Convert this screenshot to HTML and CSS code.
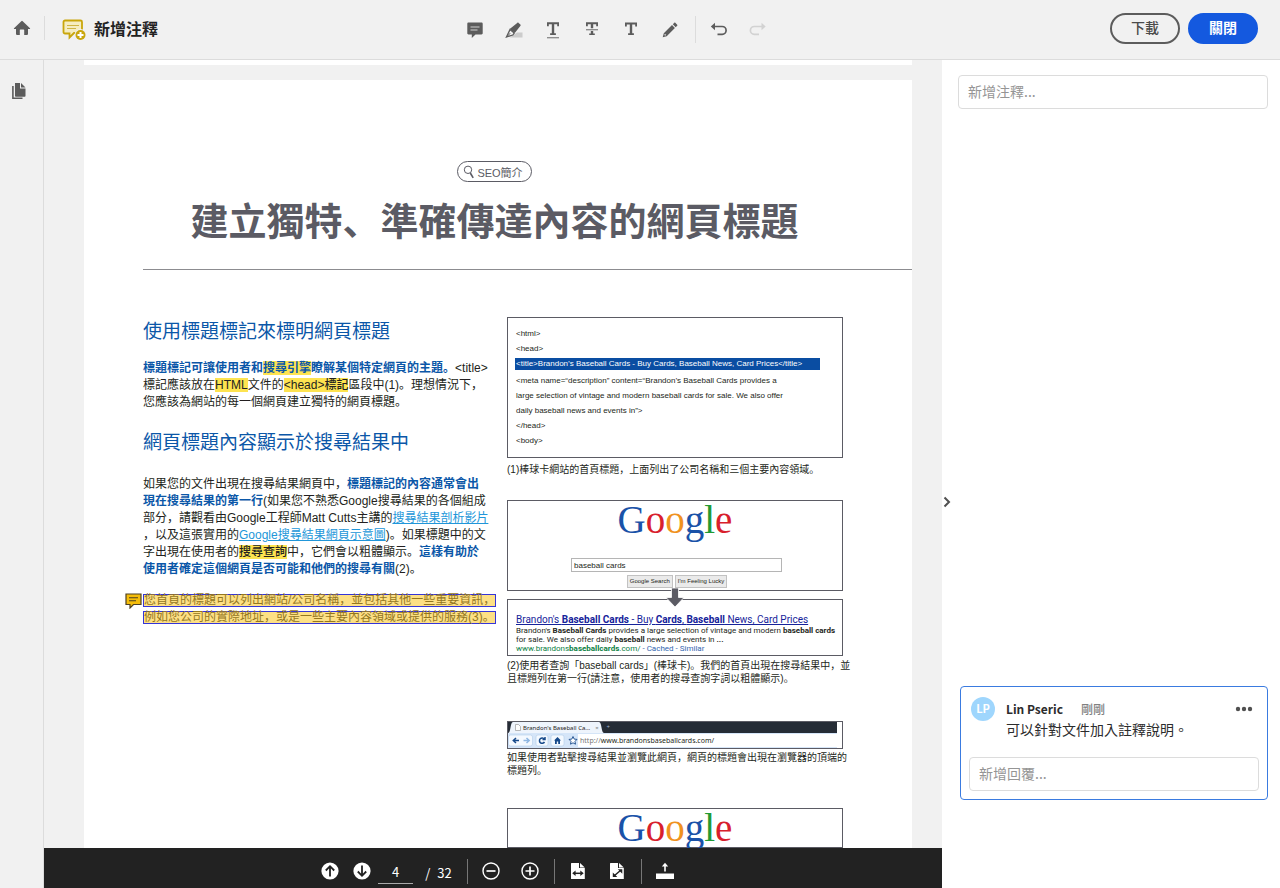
FILE: index.html
```html
<!DOCTYPE html>
<html lang="zh-Hant">
<head>
<meta charset="utf-8">
<meta name="viewport" content="width=device-width, initial-scale=1">
<title>新增注釋</title>
<link rel="stylesheet" href="styles.css">
</head>
<body>
<header class="topbar">
  <div class="brand">
    <button class="icon-btn home" aria-label="首頁"><svg width="18" height="16" viewBox="0 0 18 16"><path fill="#5c5c5c" d="M8.3 1.2 1 8.2c-.3.4-.1.9.4.9H3v5c0 .5.3.8.8.8h3V10c0-.4.2-.6.6-.6h3.2c.4 0 .6.2.6.6v4.9h3c.5 0 .8-.3.8-.8v-5h1.6c.5 0 .7-.5.4-.9L9.700 1.200a1 1 0 0 0-1.400 0z"/></svg></button>
    <span class="divider"></span>
    <svg class="brand-icon" width="24" height="22" viewBox="0 0 24 22"><path d="M3 1.500h15.500a1.500 1.500 0 0 1 1.500 1.500v11H12L7.500 18.500V14.500H3A1.500 1.500 0 0 1 1.500 13V3A1.500 1.500 0 0 1 3 1.500z" fill="#f5edc2" stroke="#c9a60c" stroke-width="1.800"/><path d="M5 6.500h12M5 9.500h9" stroke="#cfb545" stroke-width="1.200"/><circle cx="18.500" cy="16" r="6" fill="#f1f1f1"/><circle cx="18.500" cy="16" r="5" fill="#c9a60c"/><path d="M18.500 13v6M15.500 16h6" stroke="#fff" stroke-width="2"/></svg>
    <h1 class="app-title">新增注釋</h1>
  </div>
  <nav class="tools" aria-label="注釋工具">
    <button class="icon-btn" aria-label="新增注釋"><svg width="18" height="18" viewBox="0 0 18 18"><path fill="#5c5c5c" d="M2.500 1.500h13c.7 0 1.200.5 1.200 1.200v9.600c0 .7-.5 1.200-1.200 1.200H9.500L5.800 17v-3.500H2.500c-.7 0-1.200-.5-1.200-1.200V2.700c0-.7.500-1.200 1.200-1.200z"/><path d="M4.500 6h9M4.500 9h7" stroke="#d0d0d0" stroke-width="1.200"/></svg></button>
    <button class="icon-btn" aria-label="螢光標示"><svg width="18" height="18" viewBox="0 0 18 18"><path fill="#ccc" d="M5 16.500 12 11.500h5.500v5z"/><path fill="#5c5c5c" d="M12.200 1.900c.5-.4 1-.4 1.400 0l1.800 1.500c.4.4.4.9.1 1.400L9.800 12 4.700 8z"/><path d="M5 8.600 9.200 12 7.800 14 1.500 16z" fill="#f1f1f1" stroke="#5c5c5c" stroke-width="1.300"/><path d="m1.500 16.200 3.700-4" stroke="#5c5c5c"/></svg></button>
    <button class="icon-btn" aria-label="底線"><svg width="18" height="18" viewBox="0 0 18 18"><path fill="#5c5c5c" d="M3 1.300h12v4h-1.800v-2H10.200v8.900h1.700V14H6.100v-1.800h1.700V3.300H4.800v2H3z"/><path d="M3 16.700h12" stroke="#888" stroke-width="1.300"/></svg></button>
    <button class="icon-btn" aria-label="刪除線"><svg width="18" height="18" viewBox="0 0 18 18"><path fill="#5c5c5c" d="M3 1.300h12v4h-1.800v-2H10.200v4H7.800v-4H4.800v2H3zM7.800 10h2.400v2.400h1.600V14H6.200v-1.600h1.600z"/><path d="M3 8.700h12" stroke="#888" stroke-width="1.300"/></svg></button>
    <button class="icon-btn" aria-label="文字"><svg width="18" height="18" viewBox="0 0 18 18"><path fill="#5c5c5c" d="M3 1.500h12v4h-1.800v-2H10.200v8.700h1.700V14H6.100v-1.800h1.700V3.500H4.800v2H3z"/></svg></button>
    <button class="icon-btn" aria-label="鉛筆"><svg width="18" height="18" viewBox="0 0 18 18"><path fill="#5c5c5c" d="M13.300 1.800c.3-.3.700-.3 1 0l1.900 1.900c.3.300.3.700 0 1L14.700 6.200 11.800 3.300zM11 4.100 13.900 7 5.700 15.200 1.700 16.300 2.800 12.300z"/><path d="m3.600 13.300 1.100 1.100" stroke="#ccc" stroke-width="1.500"/></svg></button>
    <span class="divider tall"></span>
    <button class="icon-btn" aria-label="復原"><svg width="18" height="18" viewBox="0 0 18 18"><path d="M3 5.500h9.200a3.900 3.900 0 0 1 0 7.800H7.500" fill="none" stroke="#5c5c5c" stroke-width="1.700"/><path fill="#5c5c5c" d="M.8 5.500 5 1.800v7.400z"/></svg></button>
    <button class="icon-btn" aria-label="重做" disabled><svg width="18" height="18" viewBox="0 0 18 18"><path d="M14.500 5.500H5.300a3.900 3.900 0 0 0 0 7.800h4.700" fill="none" stroke="#d2d2d2" stroke-width="1.700"/><path fill="#d2d2d2" d="M16.700 5.500 12.500 1.800v7.400z"/></svg></button>
  </nav>
  <div class="actions">
    <button class="pill-btn">下載</button>
    <button class="pill-btn primary">關閉</button>
  </div>
</header>

<main class="workspace">
  <aside class="rail">
    <button class="icon-btn rail-btn" aria-label="頁面縮圖"><svg width="16" height="18" viewBox="0 0 16 18"><path fill="#5c5c5c" d="M4 1h5v5.500h5.500V14a.8.8 0 0 1-.8.800H4.800A.8.800 0 0 1 4 14z"/><path fill="#5c5c5c" d="M10 1l4.500 4.500H10z"/><path d="M1.900 4v12.200h9.600" fill="none" stroke="#5c5c5c" stroke-width="1.600"/></svg></button>
  </aside>

  <section class="center">
    <div class="viewer">
      <div class="sheet sheet-prev"></div>
      <article class="sheet page" lang="zh-Hans">
        <div class="hero">
          <span class="tag"><svg width="12" height="14" viewBox="0 0 12 14"><circle cx="5" cy="4.800" r="3.700" fill="none" stroke="#5b5b64"/><path d="m7.300 8 2.900 4.800" stroke="#5b5b64" stroke-width="1.600"/></svg>SEO簡介</span>
          <h2 class="doc-title">建立獨特、準確傳達內容的網頁標題</h2>
        </div>
        <hr class="rule">
        <div class="columns">
          <div class="col left">
            <h3 class="sub first">使用標題標記來標明網頁標題</h3>
            <p class="text"><b>標題標記可讓使用者和<mark>搜尋引擎</mark>瞭解某個特定網頁的主題。</b>&lt;title&gt;<br>標記應該放在<mark>HTML</mark>文件的<mark>&lt;head&gt;標記</mark>區段中(1)。理想情況下，<br>您應該為網站的每一個網頁建立獨特的網頁標題。</p>
            <h3 class="sub second">網頁標題內容顯示於搜尋結果中</h3>
            <p class="text">如果您的文件出現在搜尋結果網頁中，<b>標題標記的內容通常會出</b><br><b>現在搜尋結果的第一行</b>(如果您不熟悉Google搜尋結果的各個組成<br>部分，請觀看由Google工程師Matt Cutts主講的<a href="#">搜尋結果剖析影片</a><br>，以及這張實用的<a href="#">Google搜尋結果網頁示意圖</a>)。如果標題中的文<br>字出現在使用者的<mark>搜尋查詢</mark>中，它們會以粗體顯示。<b>這樣有助於</b><br><b>使用者確定這個網頁是否可能和他們的搜尋有關</b>(2)。</p>
            <div class="annotated">
              <svg class="note-pin" width="17" height="16" viewBox="0 0 17 16"><path d="M1 1h15v10.500H8.500L5 15v-3.500H1z" fill="#f5bd0a" stroke="#4d4023" stroke-width="1.200"/><path d="M4 4.800h9M4 7.800h7" stroke="#4d4023" stroke-width="1.100"/></svg>
              <p class="note-line"><span>您首頁的標題可以列出網站/公司名稱，並包括其他一些重要資訊，</span></p>
              <p class="note-line"><span>例如您公司的實際地址，或是一些主要內容領域或提供的服務(3)。</span></p>
            </div>
          </div>

          <div class="col">
            <div class="frame code">
              <div>&lt;html&gt;</div>
              <div>&lt;head&gt;</div>
              <div class="hit">&lt;title&gt;Brandon’s Baseball Cards - Buy Cards, Baseball News, Card Prices&lt;/title&gt;</div>
              <div>&lt;meta name=“description” content=“Brandon’s Baseball Cards provides a</div>
              <div>large selection of vintage and modern baseball cards for sale. We also offer</div>
              <div>daily baseball news and events in”&gt;</div>
              <div>&lt;/head&gt;</div>
              <div>&lt;body&gt;</div>
            </div>
            <p class="caption cap-one">(1)棒球卡網站的首頁標題，上面列出了公司名稱和三個主要內容領域。</p>
            <div class="frame search">
              <div class="logo"><span class="b">G</span><span class="r">o</span><span class="o">o</span><span class="b">g</span><span class="g">l</span><span class="r">e</span></div>
              <input class="query" type="text" value="baseball cards" aria-label="搜尋">
              <div class="query-btns"><button>Google Search</button><button>I'm Feeling Lucky</button></div>
              <svg class="arrow" width="18" height="19" viewBox="0 0 18 19"><path d="M5.500 0h7v9.500H18L9 19 0 9.500h5.500z" fill="#5b5b64" stroke="#fff" stroke-width=".8"/></svg>
            </div>
            <div class="frame result">
              <a class="result-title" href="#">Brandon's <b>Baseball Cards</b> - Buy <b>Cards</b>, <b>Baseball</b> News, Card Prices</a>
              <p>Brandon's <b>Baseball Cards</b> provides a large selection of vintage and modern <b>baseball cards</b><br>for sale. We also offer daily <b>baseball</b> news and events in <b>...</b></p>
              <p class="result-url"><span>www.brandons<b>baseballcards</b>.com/</span> - Cached - Similar</p>
            </div>
            <p class="caption cap-two">(2)使用者查詢「baseball cards」(棒球卡)。我們的首頁出現在搜尋結果中，並<br>且標題列在第一行(請注意，使用者的搜尋查詢字詞以粗體顯示)。</p>
            <div class="frame browser">
              <div class="tabs">
                <svg width="5" height="11" viewBox="0 0 5 11" preserveAspectRatio="none"><path d="M0 11C3 11 2 0 5 0v11z" fill="#eef4fc"/></svg>
                <span class="tab"><svg width="6" height="7" viewBox="0 0 6 7"><path d="M.5.5h3l2 2v4h-5z" fill="#fff" stroke="#999" stroke-width=".7"/></svg>Brandon's Baseball Ca...<i>×</i></span>
                <svg width="5" height="11" viewBox="0 0 5 11" preserveAspectRatio="none"><path d="M5 11C2 11 3 0 0 0v11z" fill="#eef4fc"/></svg>
                <span class="plus">+</span>
              </div>
              <div class="address">
                <svg width="60" height="13" viewBox="0 0 60 13"><g fill="#f4f9ff" stroke="#b4cdea" stroke-width=".6"><rect x=".5" y="1" width="24" height="11" rx="2"/><rect x="28" y="1" width="12" height="11" rx="2"/><rect x="43" y="1" width="13" height="11" rx="2"/></g><g fill="none" stroke="#174a8b" stroke-width="1.500"><path d="M11 6.500H5.500M8 4 5.300 6.500 8 9"/><path d="M15.500 6.500H21M18.500 4l2.700 2.500L18.500 9" stroke="#8fb7e2"/><path d="M36.300 5A2.700 2.700 0 1 0 36.500 8M37 3v2.500h-2.500"/></g><path d="m46 6.500 3.500-3.500L53 6.500h-1V10h-1.800V7.500h-1.400V10H47V6.500z" fill="#174a8b"/></svg>
                <svg width="10" height="13" viewBox="0 0 10 13"><path d="m5 2.500 1.200 2.600 2.800.3-2 2 .5 2.800L5 8.800l-2.500 1.400.5-2.800-2-2 2.800-.3z" fill="#fff" stroke="#174a8b" stroke-width=".9"/></svg>
                <span class="url"><i>http://</i>www.brandonsbaseballcards.com/</span>
              </div>
            </div>
            <p class="caption cap-three">如果使用者點擊搜尋結果並瀏覽此網頁，網頁的標題會出現在瀏覽器的頂端的<br>標題列。</p>
            <div class="frame search">
              <div class="logo"><span class="b">G</span><span class="r">o</span><span class="o">o</span><span class="b">g</span><span class="g">l</span><span class="r">e</span></div>
            </div>
          </div>
        </div>
      </article>
    </div>

    <footer class="pager">
      <button class="icon-btn p-round" aria-label="上一頁"><svg width="18" height="18" viewBox="0 0 18 18"><circle cx="9" cy="9" r="8.600" fill="#fff"/><path d="M9 14.500V4.500M4.800 8.500 9 4.200l4.200 4.300" fill="none" stroke="#222" stroke-width="1.800"/></svg></button>
      <button class="icon-btn p-round" aria-label="下一頁"><svg width="18" height="18" viewBox="0 0 18 18"><circle cx="9" cy="9" r="8.600" fill="#fff"/><path d="M9 3.500v10M4.800 9.500 9 13.800l4.200-4.300" fill="none" stroke="#222" stroke-width="1.800"/></svg></button>
      <input class="page-no" type="text" value="4" aria-label="頁碼">
      <span class="page-total"><span>/</span><span>32</span></span>
      <span class="p-divider"></span>
      <button class="icon-btn" aria-label="縮小"><svg width="18" height="18" viewBox="0 0 18 18"><circle cx="9" cy="9" r="8" fill="none" stroke="#fff" stroke-width="1.400"/><path d="M4.500 9h9" stroke="#fff" stroke-width="1.700"/></svg></button>
      <button class="icon-btn" aria-label="放大"><svg width="18" height="18" viewBox="0 0 18 18"><circle cx="9" cy="9" r="8" fill="none" stroke="#fff" stroke-width="1.400"/><path d="M4.500 9h9M9 4.500v9" stroke="#fff" stroke-width="1.700"/></svg></button>
      <span class="p-divider"></span>
      <button class="icon-btn" aria-label="符合寬度"><svg width="18" height="18" viewBox="0 0 18 18"><path fill="#fff" d="M2 1.500A.6.600 0 0 1 2.600.9H10v5.200h5.800V17H2.600a.6.600 0 0 1-.6-.600zM11 .9l4.800 4.500H11z"/><path d="M6 11.300h6" stroke="#222" stroke-width="1.500"/><path fill="#222" d="m3.200 11.300 3.400-2.800v5.600zM14.700 11.300l-3.400-2.800v5.600z"/></svg></button>
      <button class="icon-btn" aria-label="符合頁面"><svg width="18" height="18" viewBox="0 0 18 18"><path fill="#fff" d="M2 1.500A.6.600 0 0 1 2.600.9H10v5.200h5.800V17H2.600a.6.600 0 0 1-.6-.600zM11 .9l4.800 4.500H11z"/><path d="m6.500 13.500 6-5" stroke="#222" stroke-width="1.500"/><path fill="#222" d="M4.800 15v-4.500L9.300 15zM14.300 7.200v4.500L9.800 7.200z"/></svg></button>
      <span class="p-divider"></span>
      <button class="icon-btn" aria-label="浮動工具列"><svg width="18" height="18" viewBox="0 0 18 18"><path fill="#fff" d="M0 11.500h18V17H0z"/><path d="M9 9.500V3" stroke="#fff" stroke-width="1.600"/><path fill="#fff" d="M5.800 4.500 9 .8l3.200 3.700z"/></svg></button>
    </footer>
  </section>

  <aside class="comments">
    <button class="icon-btn collapse" aria-label="收合面板"><svg width="8" height="12" viewBox="0 0 8 12"><path d="m1.500 1.500 4.500 4.500-4.500 4.500" fill="none" stroke="#505050" stroke-width="2"/></svg></button>
    <input class="field" type="text" placeholder="新增注釋..." aria-label="新增注釋">
    <section class="card">
      <div class="card-body">
        <span class="avatar">LP</span>
        <div class="card-main">
          <div class="card-head"><strong>Lin Pseric</strong><time>剛剛</time></div>
          <p class="card-text">可以針對文件加入註釋說明。</p>
        </div>
        <button class="icon-btn more" aria-label="更多選項"><svg width="18" height="6" viewBox="0 0 18 6"><g fill="#505050"><circle cx="3" cy="3" r="2.200"/><circle cx="9" cy="3" r="2.200"/><circle cx="15" cy="3" r="2.200"/></g></svg></button>
      </div>
      <input class="field" type="text" placeholder="新增回覆..." aria-label="新增回覆">
    </section>
  </aside>
</main>
</body>
</html>
```
FILE: styles.css
```css
* { box-sizing: border-box; }
body, h1, h2, h3, p { margin: 0; }
button, input { font: inherit; color: inherit; }
svg { display: block; flex: none; }

body {
  display: flex;
  flex-direction: column;
  height: 100vh;
  overflow: hidden;
  background: #f1f1f1;
  color: #2c2c2c;
  font-family: "Noto Sans CJK TC", "Noto Sans", sans-serif;
  font-size: 14px;
}

.icon-btn {
  display: grid;
  place-items: center;
  width: 39px;
  height: 39px;
  padding: 0;
  border: 0;
  background: none;
}

/* Top bar */
.topbar {
  display: grid;
  grid-template-columns: 1fr auto 1fr;
  align-items: center;
  flex: none;
  height: 60px;
  padding-right: 22px;
  padding-bottom: 3px;
  border-bottom: 1px solid #dcdcdc;
}
.brand { display: flex; align-items: center; }
.home { width: 44px; }
.divider { width: 1px; height: 24px; background: #dcdcdc; }
.tall { height: 27px; margin: 0 4px 0 5px; }
.brand-icon { margin: 4px 8px 0 17px; }
.app-title { font-size: 16px; line-height: 24px; font-weight: 700; color: #222; }
.tools { display: flex; align-items: center; margin-right: 25px; padding-top: 3px; }
.actions { display: flex; justify-content: flex-end; gap: 8px; }
.pill-btn {
  width: 70px;
  height: 31px;
  padding: 0 0 3px;
  border: 2px solid #5c5c5c;
  border-radius: 16px;
  background: none;
  color: #4b4b4b;
  font-weight: 500;
  line-height: 20px;
}
.primary { border-color: #1459df; background: #1459df; color: #fff; font-weight: 700; }

/* Workspace */
.workspace {
  display: grid;
  grid-template-columns: 44px minmax(0, 1fr) 338px;
  flex: 1;
  min-height: 0;
}
.rail { padding-top: 11px; border-right: 1px solid #dcdcdc; }
.rail-btn { width: 38px; }
.center { display: flex; flex-direction: column; min-height: 0; }
.viewer { flex: 1; min-height: 0; overflow: hidden; padding: 0 30px 0 40px; }

/* Document */
.sheet { background: #fff; }
.sheet-prev { height: 5px; margin-bottom: 15px; }
.page {
  padding: 81px 0 60px 59px;
  color: #231f20;
  font-family: "Liberation Sans", "Noto Sans CJK SC", sans-serif;
}
.hero {
  display: flex;
  flex-direction: column;
  align-items: center;
  gap: 15px;
  padding-right: 66px;
  color: #5b5b64;
}
.tag {
  display: flex;
  align-items: center;
  gap: 2px;
  height: 21px;
  padding: 0 8px 0 5px;
  border: 1px solid #5b5b64;
  border-radius: 11px;
  font-size: 11px;
}
.doc-title { font-size: 38px; line-height: 50px; font-weight: 700; white-space: nowrap; }
.rule { height: 1px; margin: 22px 0 47px; border: 0; background: #8c8c90; }
.columns {
  display: grid;
  grid-template-columns: 340fr 336fr;
  gap: 24px;
  padding-right: 69px;
}
.col { min-width: 0; white-space: nowrap; }
.left { padding-top: 2px; }
.sub { color: #0b57a8; font-size: 19px; line-height: 26px; font-weight: 400; }
.first { margin-bottom: 15px; }
.second { margin: 19px 0 20px; }
.text { font-size: 12px; line-height: 17px; }
.text b { color: #0b57a8; }
.text a { color: #2196d9; }
mark { background: #fde350; color: inherit; font-weight: 500; }
b mark { font-weight: 700; }

.annotated { position: relative; margin-top: 14px; }
.note-pin { position: absolute; top: 1px; left: -18px; }
.note-line { display: flex; height: 17px; padding: 2px 0; }
.note-line span {
  border: 1px solid #3535d8;
  background: #fde085;
  color: #94771f;
  font-size: 12px;
  line-height: 11px;
}

.frame { border: 1px solid #5b5b64; }
.code { padding: 8px 22px 9px 7px; font-size: 8px; line-height: 15px; }
.code div { padding-left: 1px; }
.code .hit { margin: 2px 0 3px; background: #0a4da2; color: #fff; line-height: 12px; }
.caption { font-size: 10px; line-height: 13px; }
.cap-one { margin: 5px 0 24px; }
.cap-two { margin: 3px 0 36px; }
.cap-three { margin: 2px 0 31px; }

.search {
  position: relative;
  display: flex;
  flex-direction: column;
  align-items: center;
}
.logo { font: 39px/38px "Liberation Serif", serif; }
.b { color: #1a52a8; }
.r { color: #d8202c; }
.o { color: #f0921e; }
.g { color: #219a34; }
.query {
  width: 211px;
  height: 14px;
  margin: 19px 0 3px 3px;
  padding: 0 2px;
  border: 1px solid #b5b5b5;
  border-radius: 0;
  background: #fff;
  font-size: 8px;
}
.query-btns { display: flex; gap: 2px; margin: 0 0 2px 4px; }
.query-btns button {
  height: 13px;
  padding: 0 2px;
  border: 1px solid #c2c2c2;
  background: #eaeaea;
  font-size: 6px;
  line-height: 11px;
}
.arrow { position: absolute; bottom: -17px; left: 50%; margin-left: -9px; z-index: 1; }
.result {
  margin-top: 8px;
  padding: 14px 8px 2px;
  font-family: Roboto, "Liberation Sans", sans-serif;
  font-size: 8px;
  line-height: 9px;
}
.result-title { display: block; color: #16239a; font-size: 10px; line-height: 12px; }
.result-url { color: #3366b0; }
.result-url span { color: #0b8043; }

.browser { height: 28px; padding-right: 5px; font-family: "Noto Sans", sans-serif; font-size: 6px; }
.tabs { display: flex; height: 11px; background: #252c36; }
.tab {
  display: flex;
  align-items: center;
  gap: 2px;
  padding-left: 2px;
  background: #eef4fc;
  color: #222;
}
.tab i { margin-left: 3px; color: #777; font-style: normal; }
.plus { margin-left: 3px; color: #9fb4cc; line-height: 10px; }
.address { display: flex; align-items: center; height: 15px; background: #d5e5f8; }
.url { flex: 1; height: 13px; padding-left: 2px; background: #fff; font-size: 7px; line-height: 13px; }
.url i { color: #777; font-style: normal; }

/* Page controls */
.pager {
  display: flex;
  align-items: center;
  justify-content: center;
  flex: none;
  height: 40px;
  padding: 6px 0 0 13px;
  background: #222;
  color: #fff;
  font-size: 13px;
}
.p-round { width: 32px; }
.page-no {
  width: 35px;
  height: 26px;
  padding: 2px 0 0;
  border: 0;
  border-bottom: 1px solid #aaa;
  background: none;
  text-align: center;
}
.page-total { display: flex; gap: 7px; padding: 2px 15px 0 12px; }
.p-divider { width: 1px; height: 25px; margin: 0 4px; background: #777; }
.page-total + .p-divider { margin-left: 0; }

/* Comment panel */
.comments {
  position: relative;
  display: flex;
  flex-direction: column;
  padding: 15px 12px 88px 16px;
  background: #fff;
}
.collapse { position: absolute; top: calc(50% + 17px); left: 0; width: 9px; height: 22px; }
.field {
  width: 100%;
  height: 34px;
  padding: 0 9px 2px;
  border: 1px solid #dcdcdc;
  border-radius: 4px;
  background: #fff;
}
.field::placeholder { color: #959595; opacity: 1; }
.card {
  margin: auto 0 0 2px;
  padding: 10px 8px 8px;
  border: 1px solid #3a7be0;
  border-radius: 4px;
}
.card-body { display: flex; padding: 0 2px; }
.avatar {
  flex: none;
  width: 24px;
  height: 24px;
  border-radius: 50%;
  background: #9fd6fd;
  color: #fff;
  font-size: 11px;
  font-weight: 700;
  line-height: 22px;
  text-align: center;
}
.card-main { flex: 1; padding: 2px 0 18px 11px; }
.card-head { display: flex; gap: 18px; font-size: 12px; line-height: 20px; }
.card-head time { color: #808080; font-weight: 500; }
.card-text { line-height: 20px; }
.more { width: 26px; height: 24px; }
```
